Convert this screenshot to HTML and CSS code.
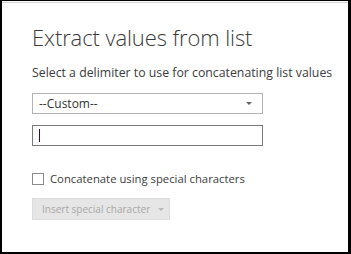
FILE: index.html
```html
<!DOCTYPE html>
<html lang="en">
<head>
  <meta charset="UTF-8" />
  <title>Extract values from list</title>
  <link rel="stylesheet" href="styles.css">
</head>
<body>
  <div class="frame">
    <div class="dialog">
      <div class="title">Extract values from list</div>
      <div class="hint">Select a delimiter to use for concatenating list values</div>

      <div class="select">
        <span>--Custom--</span>
        <span class="caret"></span>
      </div>

      <div class="text-input"><span class="cursor"></span></div>

      <label class="check">
        <span class="box"></span>
        Concatenate using special characters
      </label>

      <div class="insert-btn">
        Insert special character
        <span class="caret light"></span>
      </div>
    </div>
  </div>
</body>
</html>
```

FILE: styles.css
```css
* {
  box-sizing: border-box;
}

body {
  margin: 0;
  background: #fff;
  font-family: 'Open Sans', 'Liberation Sans', sans-serif;
  color: #444;
}

.frame {
  width: 351px;
  height: 254px;
  border-style: solid;
  border-color: #000;
  border-width: 1px 3px 2px 2px;
  background: #fff;
  overflow: hidden;
}

.dialog {
  height: calc(100% - 1px);
  margin-top: 1px;
  border-top: 1px solid #d4d4d4;
  padding: 19px 0 0 30px;
}

.title {
  font-size: 22px;
  font-weight: 300;
  color: #3a3a3a;
  line-height: 30px;
  letter-spacing: -0.1px;
}

.hint {
  margin-top: 13px;
  font-size: 12.3px;
  line-height: 16px;
  color: #3c3c3c;
}

.select,
.text-input {
  width: 231px;
  height: 21px;
  display: flex;
  align-items: center;
  justify-content: space-between;
  padding: 0 10px 0 6px;
  font-size: 12px;
  color: #333;
}

.select {
  margin-top: 12px;
  border: 1px solid #b4b4b4;
}

.text-input {
  margin-top: 11px;
  border: 1px solid #7a7a7a;
}

.cursor {
  width: 1px;
  height: 13px;
  background: #2a1040;
}

.caret {
  width: 0;
  height: 0;
  border-left: 3px solid transparent;
  border-right: 3px solid transparent;
  border-top: 3px solid #666;
}

.caret.light {
  border-top-color: #b8b8b8;
  margin-left: 8px;
}

.check {
  margin-top: 25px;
  display: flex;
  align-items: center;
  gap: 6px;
  font-size: 11.3px;
  color: #3c3c3c;
}

.box {
  width: 12px;
  height: 12px;
  border: 1px solid #8a8a8a;
  background: #fff;
}

.insert-btn {
  margin-top: 12px;
  width: 138px;
  height: 22px;
  display: flex;
  align-items: center;
  padding-left: 9px;
  background: #e6e6e6;
  border: 1px solid #dcdcdc;
  font-size: 10px;
  white-space: nowrap;
  color: #a6a6a6;
}
```
